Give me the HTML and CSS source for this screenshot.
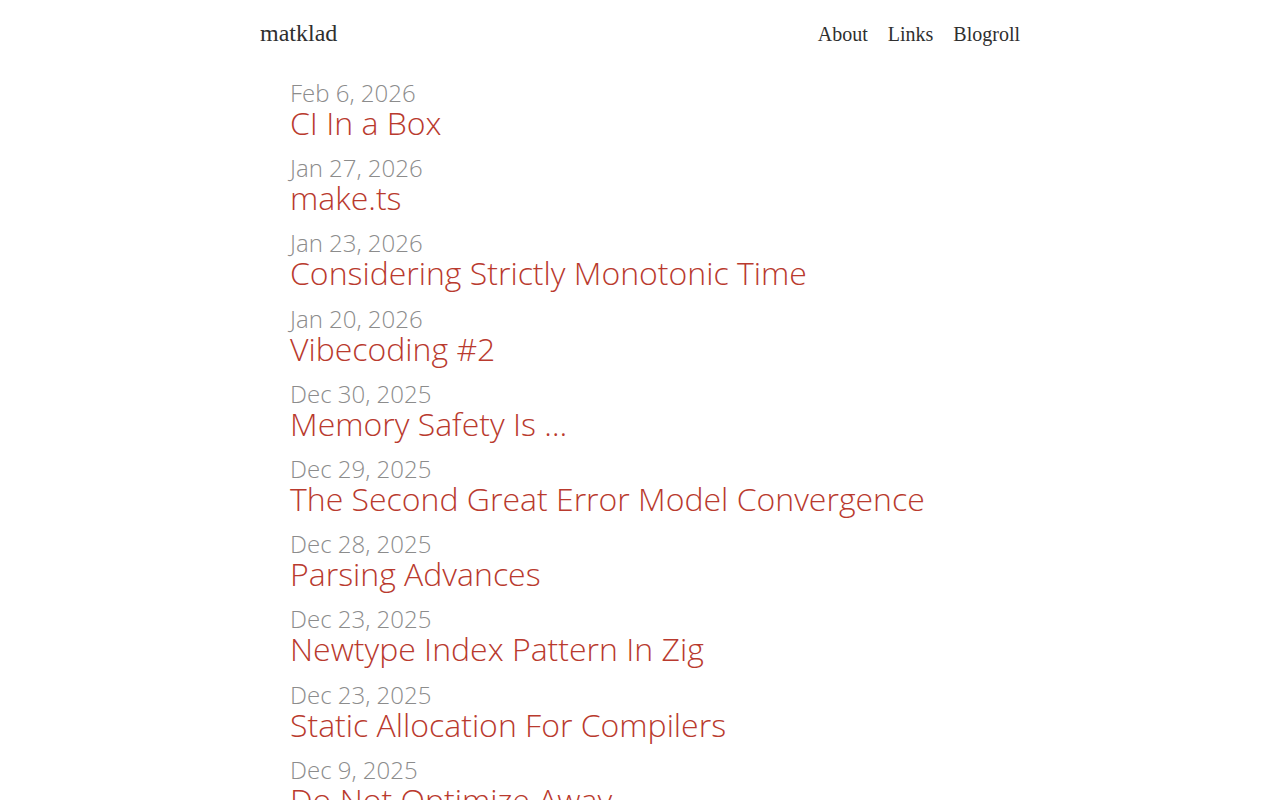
FILE: index.html
```html
<!DOCTYPE html>
<html lang="en">
<head>
<meta charset="utf-8">
<title>matklad</title>
<link rel="stylesheet" href="styles.css">
</head>
<body>
<header class="site-header">
  <a class="logo" href="#">matklad</a>
  <nav class="nav">
    <a href="#">About</a>
    <a href="#">Links</a>
    <a href="#">Blogroll</a>
  </nav>
</header>
<main class="posts">
  <ul class="post-list">
    <li class="post"><time class="date">Feb 6, 2026</time><a class="title" href="#">CI In a Box</a></li>
    <li class="post"><time class="date">Jan 27, 2026</time><a class="title" href="#">make.ts</a></li>
    <li class="post"><time class="date">Jan 23, 2026</time><a class="title" href="#">Considering Strictly Monotonic Time</a></li>
    <li class="post"><time class="date">Jan 20, 2026</time><a class="title" href="#">Vibecoding #2</a></li>
    <li class="post"><time class="date">Dec 30, 2025</time><a class="title" href="#">Memory Safety Is …</a></li>
    <li class="post"><time class="date">Dec 29, 2025</time><a class="title" href="#">The Second Great Error Model Convergence</a></li>
    <li class="post"><time class="date">Dec 28, 2025</time><a class="title" href="#">Parsing Advances</a></li>
    <li class="post"><time class="date">Dec 23, 2025</time><a class="title" href="#">Newtype Index Pattern In Zig</a></li>
    <li class="post"><time class="date">Dec 23, 2025</time><a class="title" href="#">Static Allocation For Compilers</a></li>
    <li class="post"><time class="date">Dec 9, 2025</time><a class="title" href="#">Do Not Optimize Away</a></li>
    <li class="post"><time class="date">Dec 1, 2025</time><a class="title" href="#">Quick Notes</a></li>
  </ul>
</main>
</body>
</html>
```

FILE: styles.css
```css
html, body {
  margin: 0;
  padding: 0;
  background: #ffffff;
}

body {
  font-family: "Open Sans", "Noto Sans", sans-serif;
  font-weight: 300;
}

a {
  text-decoration: none;
}

.site-header {
  width: 760px;
  margin: 0 auto;
  padding-top: 20px;
  display: flex;
  justify-content: space-between;
  align-items: baseline;
  font-family: "Liberation Serif", "DejaVu Serif", serif;
  font-weight: 400;
}

.logo {
  font-size: 24px;
  color: #2f2f2f;
}

.nav {
  display: flex;
  gap: 20px;
}

.nav a {
  font-size: 20px;
  color: #2f2f2f;
}

.posts {
  width: 730px;
  margin: 0 auto;
  padding-left: 30px;
  padding-top: 34px;
}

.post-list {
  list-style: none;
  margin: 0;
  padding: 0;
}

.post {
  display: flex;
  flex-direction: column;
  margin-bottom: 15.2px;
}

.date {
  font-size: 24px;
  line-height: 24px;
  color: #8c8c8c;
}

.title {
  font-size: 32px;
  line-height: 36px;
  color: #b93a2e;
}
```
